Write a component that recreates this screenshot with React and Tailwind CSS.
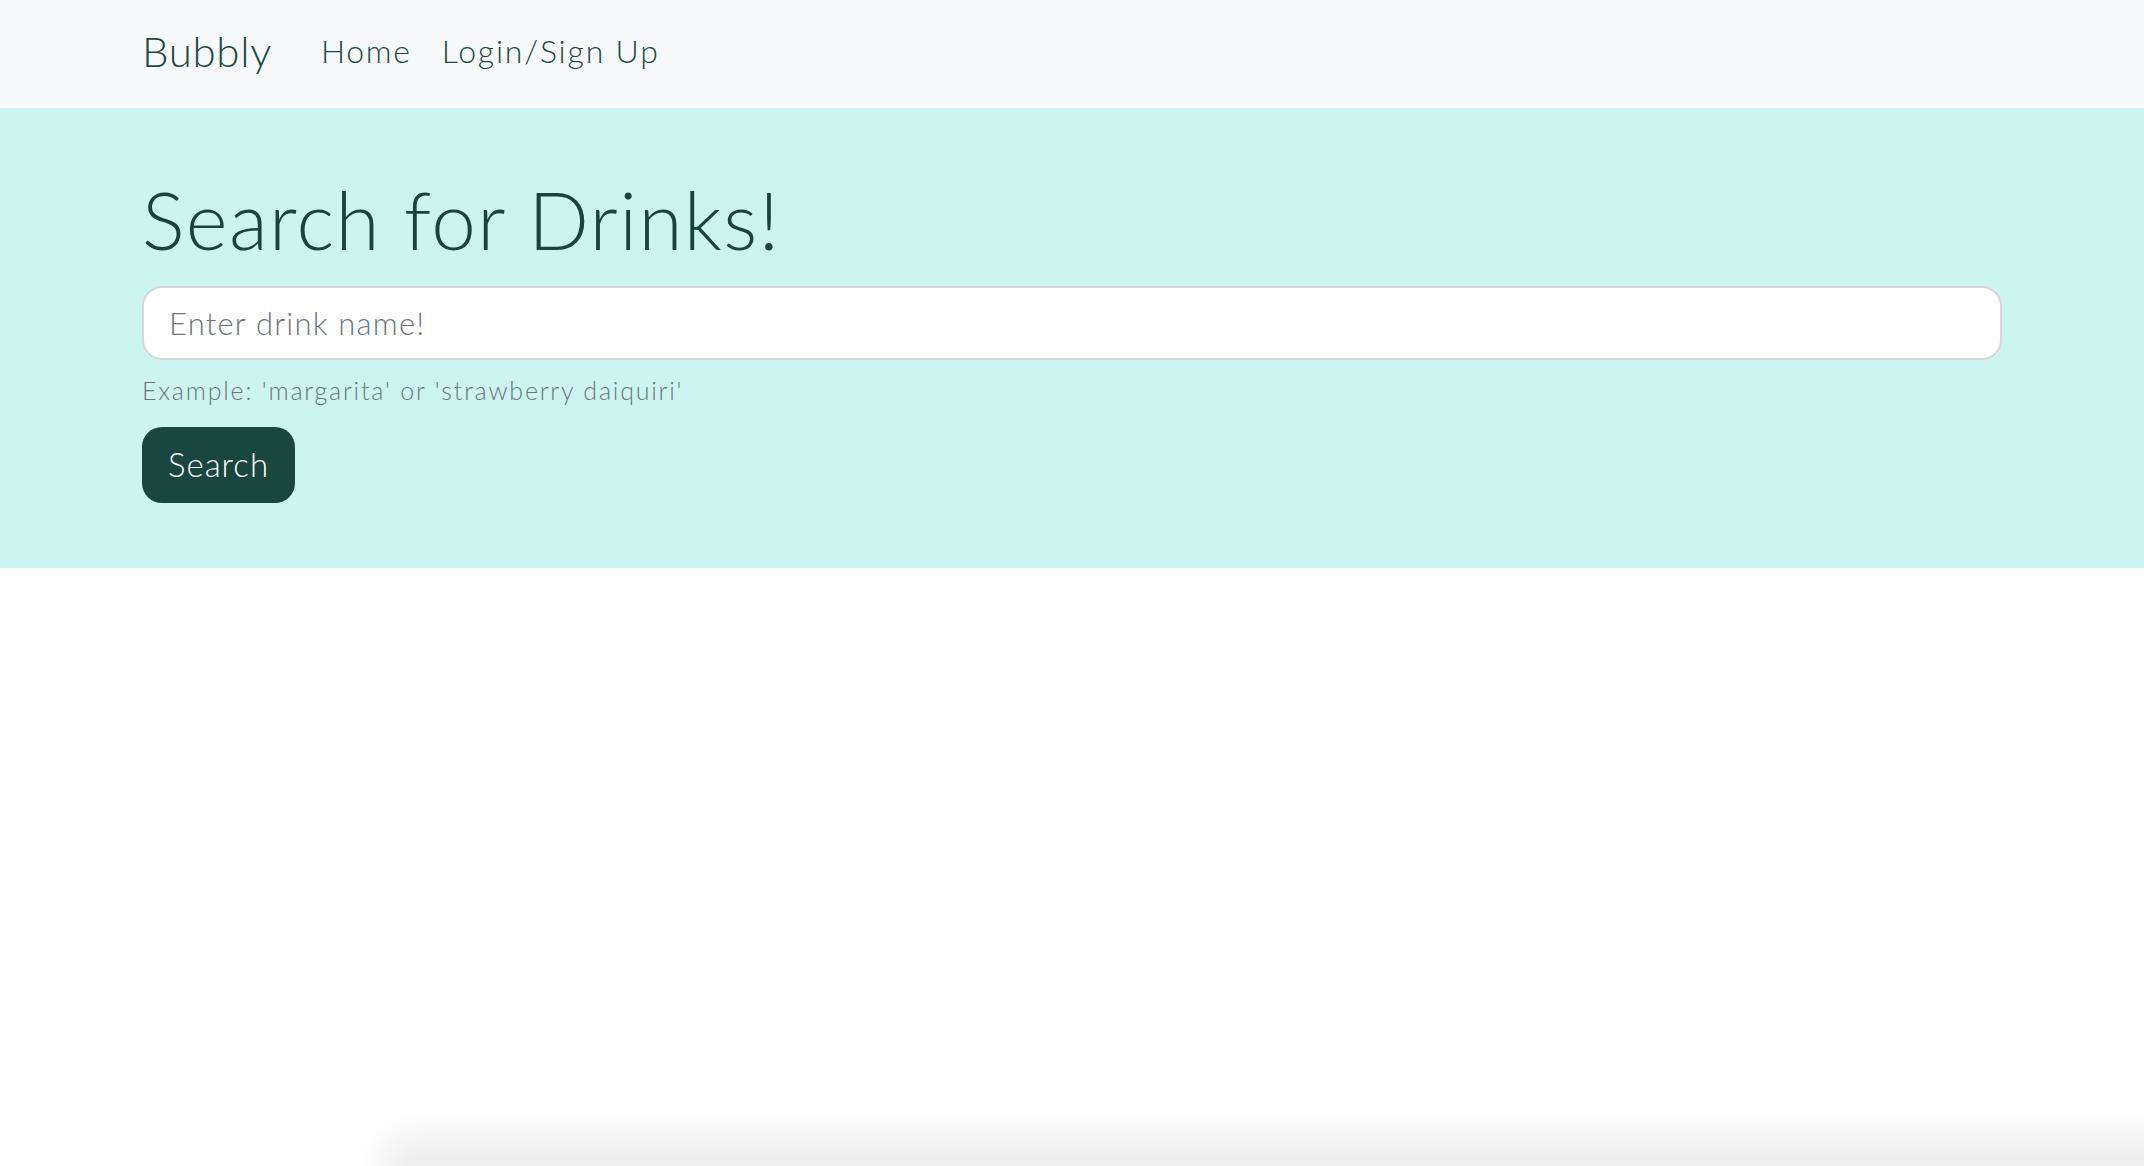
import React from 'react';

const font = { fontFamily: 'Lato, "Open Sans", sans-serif' };

const NavBar = () => (
  <nav className="h-[108px] bg-[#f8f9fa]">
    <div className="flex items-start px-[142px]">
      <a className="mt-[26px] text-[42px] leading-[50px] font-light tracking-[0.7px] text-[#1b4a44]">Bubbly</a>
      <div className="flex ml-[49px]">
        <a className="mt-[32px] text-[32px] leading-[38px] font-light tracking-[1.7px] text-[#1b4a44]">Home</a>
        <a className="mt-[32px] ml-[30px] text-[32px] leading-[38px] font-light tracking-[1.8px] text-[#1b4a44]">Login/Sign Up</a>
      </div>
    </div>
  </nav>
);

const SearchHero = () => (
  <section className="bg-[#ccf5f1] pt-[63px] pb-[65px]">
    <div className="px-[142px]">
      <h1 className="text-[80px] leading-[96px] font-light tracking-[1.4px] text-[#17443f]">Search for Drinks!</h1>
      <input
        type="text"
        placeholder="Enter drink name!"
        className="mt-[19px] block w-full h-[74px] rounded-[20px] border-2 border-[#d3d7da] bg-white pl-[25px] text-[31px] font-light tracking-[1.2px] text-[#495057] placeholder:text-[#6c757d] outline-none"
        style={font}
      />
      <p className="mt-[12px] text-[25px] leading-[36px] font-light tracking-[1.8px] text-[#6c757d]">
        Example: 'margarita' or 'strawberry daiquiri'
      </p>
      <button
        className="mt-[19px] h-[76px] w-[153px] rounded-[20px] bg-[#19463f] text-[33px] font-light tracking-[1px] text-white"
        style={font}
      >
        Search
      </button>
    </div>
  </section>
);

export default function App() {
  return (
    <div className="relative min-h-[1166px] bg-white overflow-hidden" style={font}>
      <NavBar />
      <SearchHero />
      {/* faint shadow at the bottom edge */}
      <div className="pointer-events-none absolute bottom-[-30px] left-[380px] right-[-40px] h-[60px] rounded-[40px] bg-[#ececec] blur-[18px]" />
    </div>
  );
}
